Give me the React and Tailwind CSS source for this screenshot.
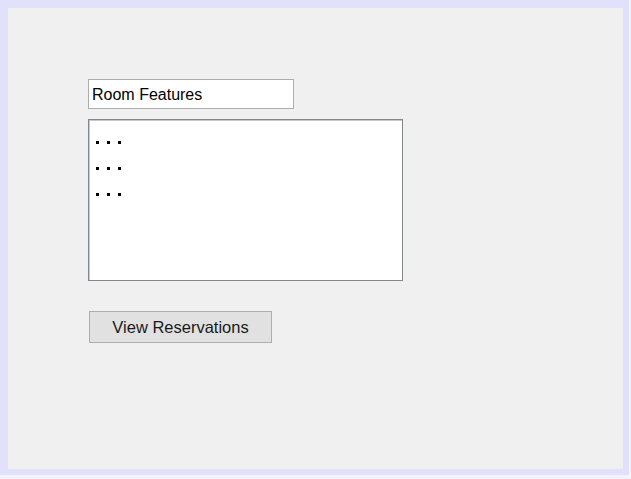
import React from 'react';

const App = () => {
  return (
    <div className="w-[631px] h-[479px] bg-[#f3f3fe]" style={{ fontFamily: '"Liberation Sans", Arial, sans-serif' }}>
      <div className="w-[629px] h-[475px] border-t-8 border-l-8 border-r-[6px] border-b-[6px] border-[#e1e1fc] bg-[#f0f0f0] pl-[80px] pt-[71px] flex flex-col items-start">
        {/* Text field */}
        <div className="w-[206px] h-[30px] bg-white border border-[#acacac] flex items-center pl-[3px] pt-[1px] text-[16px] text-black">
          Room Features
        </div>

        {/* List box */}
        <div className="mt-[10px] w-[315px] h-[162px] bg-white border border-[#828790] shadow-[inset_1px_1px_0_#c8c8c8] pl-[7px] pt-[9px] flex flex-col">
          {[0, 1, 2].map(i => (
            <div key={i} className="h-[26px] flex items-center gap-[8px]">
              <span className="w-[3px] h-[3px] bg-black" />
              <span className="w-[3px] h-[3px] bg-black" />
              <span className="w-[3px] h-[3px] bg-black" />
            </div>
          ))}
        </div>

        {/* Button */}
        <button className="mt-[30px] ml-[1px] w-[183px] h-[32px] bg-[#e1e1e1] border border-[#adadad] text-[16.5px] text-[#1a1a1a] flex items-center justify-center">
          View Reservations
        </button>
      </div>
    </div>
  );
};

export default App;
